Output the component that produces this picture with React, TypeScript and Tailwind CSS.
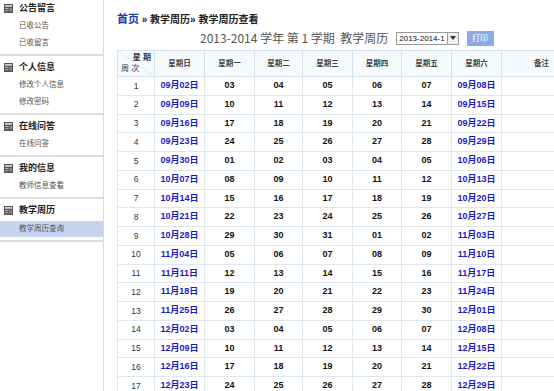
import React from 'react'

const menu = [
  { title: '公告留言', items: ['已收公告', '已收留言'] },
  { title: '个人信息', items: ['修改个人信息', '修改密码'] },
  { title: '在线问答', items: ['在线问答'] },
  { title: '我的信息', items: ['教师信息查看'] },
  { title: '教学周历', items: ['教学周历查询'] },
]

const days = ['星期日', '星期一', '星期二', '星期三', '星期四', '星期五', '星期六']

const pad = (n: number) => String(n).padStart(2, '0')

function buildRows() {
  const rows: { week: number; cells: string[] }[] = []
  for (let w = 0; w < 17; w++) {
    const cells: string[] = []
    for (let d = 0; d < 7; d++) {
      const dt = new Date(2013, 8, 2 + w * 7 + d)
      if (d === 0 || d === 6) cells.push(`${pad(dt.getMonth() + 1)}月${pad(dt.getDate())}日`)
      else cells.push(pad(dt.getDate()))
    }
    rows.push({ week: w + 1, cells })
  }
  return rows
}

function MenuIcon() {
  return (
    <svg width="9" height="9" viewBox="0 0 9 9" className="shrink-0">
      <rect x="0" y="0" width="9" height="9" fill="#555" />
      <rect x="1" y="1" width="7" height="1.8" fill="#cfcfcf" />
      <rect x="1" y="4" width="3.5" height="1" fill="#b5b5b5" />
      <rect x="1" y="6.2" width="3.5" height="1" fill="#b5b5b5" />
      <rect x="5.5" y="4" width="2.5" height="3.5" fill="#8a8a8a" />
    </svg>
  )
}

function Sidebar() {
  return (
    <div className="w-[104px] shrink-0 border-r border-[#d9d9d9] h-full">
      {menu.map((sec, i) => (
        <div key={sec.title} className={`${i === 0 ? '' : 'pt-[3px]'} pb-[3px] border-b-2 border-[#dddddd]`}>
          <div className="h-[17px] flex items-center gap-[6px] pl-[4px] text-[9px] font-bold text-[#222] whitespace-nowrap">
            <MenuIcon />
            <span>{sec.title}</span>
          </div>
          {sec.items.map((it) => (
            <div
              key={it}
              className={`flex items-center pl-[19px] text-[7.5px] text-[#555] whitespace-nowrap ${it === '教学周历查询' ? 'bg-[#c6d5ef] h-[16px] mt-[2px]' : 'h-[17px]'}`}
            >
              {it}
            </div>
          ))}
        </div>
      ))}
    </div>
  )
}

export default function App() {
  const rows = buildRows()
  const widths = ['w-[37px]', 'w-[50px]', 'w-[50px]', 'w-[48px]', 'w-[50px]', 'w-[49px]', 'w-[50px]', 'w-[50px]', 'w-[80px]']

  return (
    <div
      className="w-[554px] h-[391px] overflow-hidden bg-white flex"
      style={{ fontFamily: '"Liberation Sans", "Noto Sans CJK SC", sans-serif' }}
    >
      <Sidebar />
      <div className="flex-1 pl-[13px] pt-[11px] min-w-0">
        <div className="text-[10px] font-bold text-[#222] h-[16px] leading-[16px] whitespace-nowrap">
          <span className="text-[#1f3c9e] text-[11px]">首页</span> » 教学周历» 教学周历查看
        </div>
        <div className="flex items-center h-[22px] ml-[83px] whitespace-nowrap w-[400px]">
          <span
            className="text-[12px] text-[#555] shrink-0"
            style={{ fontFamily: '"Noto Sans CJK SC", sans-serif' }}
          >
            2013-2014 学年 第 1 学期&nbsp; 教学周历
          </span>
          <div className="ml-[8px] flex items-center h-[13px] border border-[#9a9a9a] bg-white shrink-0">
            <span className="text-[8px] text-[#111] px-[2px] leading-[11px]">2013-2014-1</span>
            <span className="w-[11px] h-[11px] border-l border-[#9a9a9a] bg-[#eee] flex items-center justify-center">
              <svg width="6" height="4" viewBox="0 0 6 4"><path d="M0 0h6L3 4z" fill="#333" /></svg>
            </span>
          </div>
          <button className="ml-[8px] h-[15px] w-[27px] bg-[#8caae4] text-white text-[8px] leading-[15px] shrink-0">打印</button>
        </div>
        <table className="border-collapse mt-[1px] table-fixed" style={{ width: 464 }}>
          <colgroup>
            {widths.map((w, i) => (
              <col key={i} className={w} />
            ))}
          </colgroup>
          <thead>
            <tr className="h-[26px] bg-[#f7fafd]">
              <th className="border border-[#d3e0ef] p-0 relative text-[8px] font-normal text-[#333]">
                <svg className="absolute inset-0" width="37" height="26" viewBox="0 0 37 26" preserveAspectRatio="none">
                  <line x1="0" y1="0" x2="37" y2="26" stroke="#e0e8f2" strokeWidth="1" />
                </svg>
                <span className="absolute right-[3px] top-[2px] font-bold text-[#333] whitespace-nowrap leading-[10px]">星 期</span>
                <span className="absolute left-[3px] bottom-[2px] whitespace-nowrap leading-[10px]">周 次</span>
              </th>
              {[...days, '备注'].map((d) => (
                <th key={d} className="border border-[#d3e0ef] text-[7.5px] font-bold text-[#444]">
                  {d}
                </th>
              ))}
            </tr>
          </thead>
          <tbody>
            {rows.map((r) => (
              <tr key={r.week} className="h-[18.75px]">
                <td className="border border-[#dde7f2] text-center text-[8.5px] text-[#333] p-0">{r.week}</td>
                {r.cells.map((c, i) => (
                  <td
                    key={i}
                    className={`border border-[#dde7f2] text-center text-[9px] font-bold p-0 whitespace-nowrap ${i === 0 || i === 6 ? 'text-[#1a1ac4]' : 'text-[#111]'}`}
                  >
                    {c}
                  </td>
                ))}
                <td className="border border-[#dde7f2]"></td>
              </tr>
            ))}
          </tbody>
        </table>
      </div>
    </div>
  )
}
